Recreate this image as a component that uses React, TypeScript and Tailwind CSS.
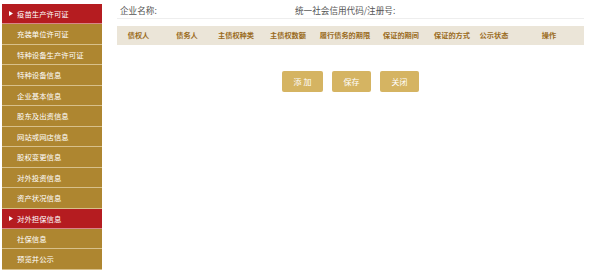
const menu = [
  { label: "疫苗生产许可证", active: true },
  { label: "充装单位许可证" },
  { label: "特种设备生产许可证" },
  { label: "特种设备信息" },
  { label: "企业基本信息" },
  { label: "股东及出资信息" },
  { label: "网站或网店信息" },
  { label: "股权变更信息" },
  { label: "对外投资信息" },
  { label: "资产状况信息" },
  { label: "对外担保信息", active: true },
  { label: "社保信息" },
  { label: "预览并公示" },
];

const columns = [
  { title: "债权人", w: "w-[43px]" },
  { title: "债务人", w: "w-[54px]" },
  { title: "主债权种类", w: "w-[44px]" },
  { title: "主债权数额", w: "w-[60px]" },
  { title: "履行债务的期限", w: "w-[54px]" },
  { title: "保证的期间", w: "w-[58px]" },
  { title: "保证的方式", w: "w-[44px]" },
  { title: "公示状态", w: "w-[40px]" },
  { title: "操作", w: "flex-1" },
];

export default function App() {
  return (
    <div
      className="flex w-[590px] h-[279px] bg-white"
      style={{ fontFamily: '"Noto Sans CJK SC", "Noto Sans", sans-serif' }}
    >
      {/* sidebar */}
      <div className="ml-[2px] mt-[4px] w-[100px] flex flex-col self-start">
        {menu.map((m, i) => (
          <div
            key={i}
            className={`h-[20.46px] flex items-center border-b border-[#d8c08a] text-[7.4px] leading-none text-white ${
              m.active ? "bg-[#b51c20] border-[#d8868a]" : "bg-[#ae8630]"
            }`}
          >
            <span className="w-[14px] flex justify-center pl-[3px]">
              {m.active && (
                <svg width="4" height="5" viewBox="0 0 4 5">
                  <path d="M0 0 L4 2.5 L0 5 Z" fill="#fff" />
                </svg>
              )}
            </span>
            <span className="ml-[1px]">{m.label}</span>
          </div>
        ))}
      </div>

      {/* content */}
      <div className="ml-[15px] w-[467px] flex flex-col">
        <div className="h-[16px] mt-[3px] flex items-center text-[8.6px] text-[#555] border-b border-[#eeeeee] pb-[1px]">
          <span className="ml-[3px] w-[175px]">企业名称:</span>
          <span>统一社会信用代码/注册号:</span>
        </div>
        <div className="mt-[7px] h-[19px] bg-[#ebe5d8] flex items-center text-[7.2px] font-bold text-[#9a6b1c]">
          {columns.map((c, i) => (
            <div key={i} className={`${c.w} text-center whitespace-nowrap`}>
              {c.title}
            </div>
          ))}
        </div>
        <div className="mt-[26px] flex justify-center gap-[9px] text-[8px] text-white">
          <button className="w-[41px] h-[21px] rounded-[2px] bg-[#d5b462] tracking-[2px] pl-[2px]">
            添加
          </button>
          <button className="w-[39px] h-[21px] rounded-[2px] bg-[#d5b462]">保存</button>
          <button className="w-[39px] h-[21px] rounded-[2px] bg-[#d5b462]">关闭</button>
        </div>
      </div>
    </div>
  );
}
